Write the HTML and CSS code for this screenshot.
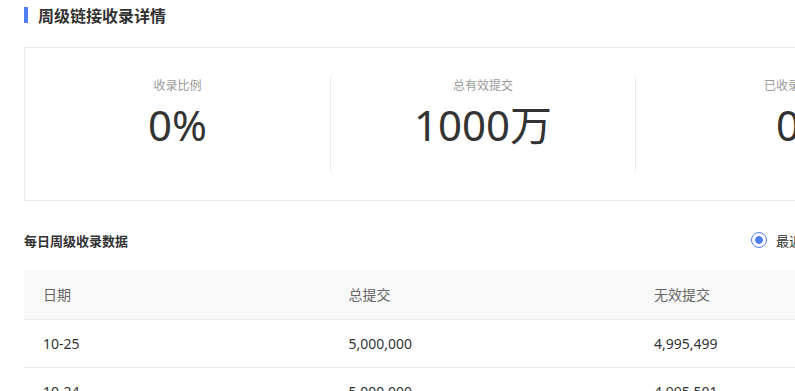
FILE: index.html
```html
<!DOCTYPE html>
<html lang="zh-CN">
<head>
    <meta charset="UTF-8">
    <meta name="viewport" content="width=device-width, initial-scale=1.0">
    <title>周级链接收录详情</title>
    <link rel="stylesheet" href="styles.css">
</head>
<body>
    <div class="page">
        <!-- 标题 -->
        <div class="page-title">周级链接收录详情</div>

        <!-- 概览 -->
        <section class="stats">
            <div class="stat">
                <div class="stat-label">收录比例</div>
                <div class="stat-value">0%</div>
            </div>
            <div class="stat">
                <div class="stat-label">总有效提交</div>
                <div class="stat-value">1000万</div>
            </div>
            <div class="stat">
                <div class="stat-label">已收录数</div>
                <div class="stat-value">0</div>
            </div>
            <div class="stat">
                <div class="stat-label">未收录数</div>
                <div class="stat-value">1000万</div>
            </div>
        </section>

        <!-- 每日数据 -->
        <div class="section-head">
            <h3>每日周级收录数据</h3>
            <div class="range">
                <label class="radio checked"><span class="dot"></span>最近7天</label>
                <label class="radio"><span class="dot"></span>最近30天</label>
            </div>
        </div>

        <table class="data-table">
            <thead>
                <tr>
                    <th>日期</th>
                    <th>总提交</th>
                    <th>无效提交</th>
                    <th>有效提交</th>
                </tr>
            </thead>
            <tbody>
                <tr>
                    <td>10-25</td>
                    <td>5,000,000</td>
                    <td>4,995,499</td>
                    <td>4,501</td>
                </tr>
                <tr>
                    <td>10-24</td>
                    <td>5,000,000</td>
                    <td>4,995,501</td>
                    <td>4,499</td>
                </tr>
                <tr>
                    <td>10-23</td>
                    <td>5,000,000</td>
                    <td>4,995,512</td>
                    <td>4,488</td>
                </tr>
            </tbody>
        </table>
    </div>
</body>
</html>
```

FILE: styles.css
```css
* {
    margin: 0;
    padding: 0;
    box-sizing: border-box;
}

body {
    background: #fff;
    overflow: hidden;
    font-family: "Noto Sans", "Noto Sans CJK SC", sans-serif;
    color: #333;
}

.page {
    width: 1270px;
    padding: 0 24px;
}

/* 标题 */
.page-title {
    display: flex;
    align-items: center;
    height: 30px;
    font-size: 16px;
    font-weight: bold;
    color: #333;
}

.page-title::before {
    content: "";
    width: 4px;
    height: 16px;
    margin-right: 10px;
    background: #4e7ff5;
}

/* 概览 */
.stats {
    display: grid;
    grid-template-columns: repeat(4, 1fr);
    margin-top: 17px;
    padding: 28px 0;
    border: 1px solid #ebebeb;
}

.stat {
    height: 96px;
    padding-top: 1px;
    text-align: center;
    border-left: 1px solid #ebebeb;
}

.stat:first-child {
    border-left: none;
}

.stat-label {
    font-size: 12px;
    line-height: 18px;
    color: #999;
}

.stat-value {
    margin-top: 5px;
    font-size: 42px;
    line-height: 50px;
    color: #333;
}

/* 每日数据 */
.section-head {
    display: flex;
    align-items: center;
    justify-content: space-between;
    height: 69px;
    padding-top: 9px;
}

.section-head h3 {
    font-size: 13px;
    font-weight: bold;
    color: #333;
}

.range {
    display: flex;
    gap: 24px;
    width: 495px;
    font-size: 13px;
}

.radio {
    display: flex;
    align-items: center;
    color: #333;
}

.radio .dot {
    width: 16px;
    height: 16px;
    margin-right: 9px;
    border: 1px solid #ccc;
    border-radius: 50%;
}

.radio.checked .dot {
    border-color: #4e7ff5;
    background: radial-gradient(circle, #4e7ff5 3.5px, #fff 4.2px);
}

.data-table {
    width: 100%;
    border-collapse: collapse;
    table-layout: fixed;
    font-size: 14px;
}

.data-table th,
.data-table td {
    padding-left: 19px;
    text-align: left;
    border-bottom: 1px solid #ebebeb;
}

.data-table th {
    height: 49px;
    font-weight: normal;
    color: #666;
    background: #f8f8f8;
}

.data-table td {
    height: 48px;
    color: #333;
}
```
